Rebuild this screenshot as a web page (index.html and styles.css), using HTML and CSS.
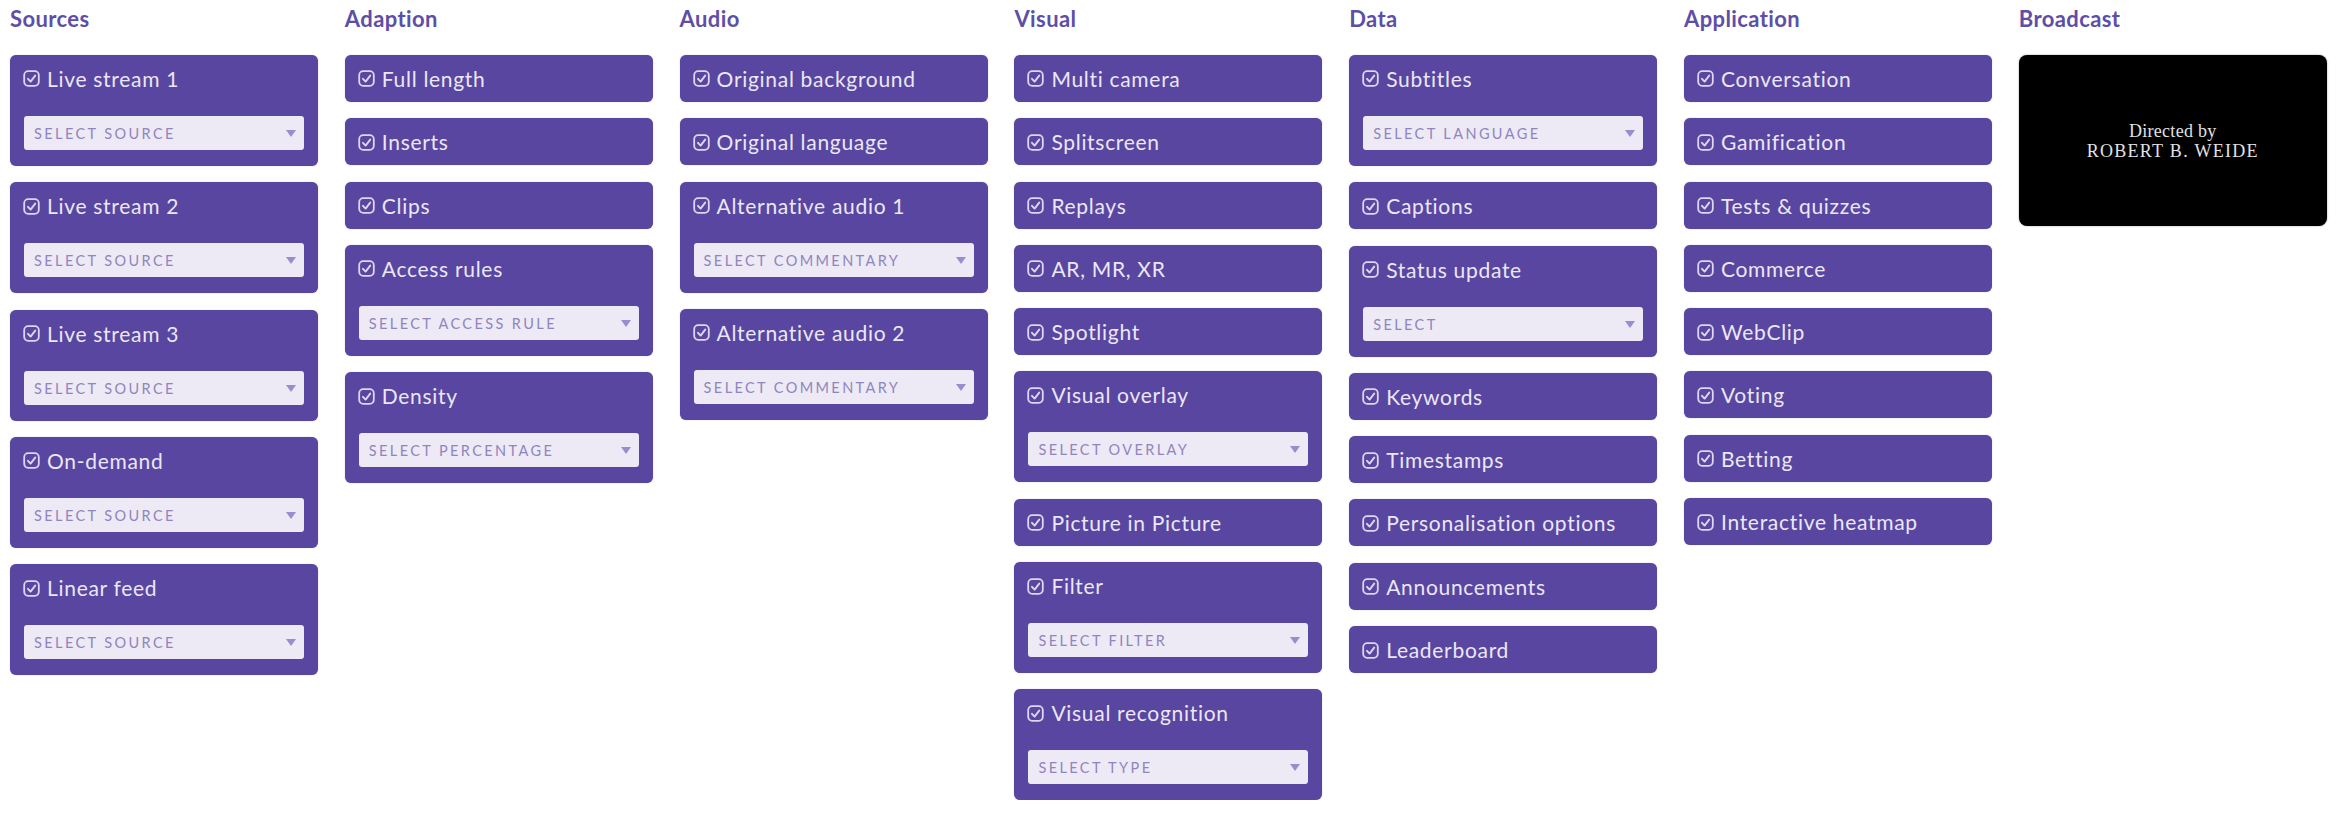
FILE: index.html
```html
<!DOCTYPE html>
<html>
<head>
    <meta charset="UTF-8">
    <meta name="viewport" content="width=device-width, initial-scale=1.0">
    <title>Stream builder</title>
    <link rel="stylesheet" href="styles.css">
</head>
<body>
    <svg width="0" height="0" style="position:absolute">
        <symbol id="check" viewBox="0 0 17 17">
            <rect x="1.2" y="1.2" width="14.6" height="14.6" rx="4" fill="none" stroke="currentColor" stroke-width="1.8"/>
            <polyline points="5,8.8 7.6,11.6 12.2,5.6" fill="none" stroke="currentColor" stroke-width="1.9" stroke-linecap="round" stroke-linejoin="round"/>
        </symbol>
    </svg>

    <div class="board">

        <div class="column">
            <div class="column-title">Sources</div>
            <div class="card">
                <div class="card-label"><svg class="tick"><use href="#check"/></svg>Live stream 1</div>
                <div class="select">Select source<span class="arrow"></span></div>
            </div>
            <div class="card">
                <div class="card-label"><svg class="tick"><use href="#check"/></svg>Live stream 2</div>
                <div class="select">Select source<span class="arrow"></span></div>
            </div>
            <div class="card">
                <div class="card-label"><svg class="tick"><use href="#check"/></svg>Live stream 3</div>
                <div class="select">Select source<span class="arrow"></span></div>
            </div>
            <div class="card">
                <div class="card-label"><svg class="tick"><use href="#check"/></svg>On-demand</div>
                <div class="select">Select source<span class="arrow"></span></div>
            </div>
            <div class="card">
                <div class="card-label"><svg class="tick"><use href="#check"/></svg>Linear feed</div>
                <div class="select">Select source<span class="arrow"></span></div>
            </div>
        </div>

        <div class="column">
            <div class="column-title">Adaption</div>
            <div class="card">
                <div class="card-label"><svg class="tick"><use href="#check"/></svg>Full length</div>
            </div>
            <div class="card">
                <div class="card-label"><svg class="tick"><use href="#check"/></svg>Inserts</div>
            </div>
            <div class="card">
                <div class="card-label"><svg class="tick"><use href="#check"/></svg>Clips</div>
            </div>
            <div class="card">
                <div class="card-label"><svg class="tick"><use href="#check"/></svg>Access rules</div>
                <div class="select">Select access rule<span class="arrow"></span></div>
            </div>
            <div class="card">
                <div class="card-label"><svg class="tick"><use href="#check"/></svg>Density</div>
                <div class="select">Select percentage<span class="arrow"></span></div>
            </div>
        </div>

        <div class="column">
            <div class="column-title">Audio</div>
            <div class="card">
                <div class="card-label"><svg class="tick"><use href="#check"/></svg>Original background</div>
            </div>
            <div class="card">
                <div class="card-label"><svg class="tick"><use href="#check"/></svg>Original language</div>
            </div>
            <div class="card">
                <div class="card-label"><svg class="tick"><use href="#check"/></svg>Alternative audio 1</div>
                <div class="select">Select commentary<span class="arrow"></span></div>
            </div>
            <div class="card">
                <div class="card-label"><svg class="tick"><use href="#check"/></svg>Alternative audio 2</div>
                <div class="select">Select commentary<span class="arrow"></span></div>
            </div>
        </div>

        <div class="column">
            <div class="column-title">Visual</div>
            <div class="card">
                <div class="card-label"><svg class="tick"><use href="#check"/></svg>Multi camera</div>
            </div>
            <div class="card">
                <div class="card-label"><svg class="tick"><use href="#check"/></svg>Splitscreen</div>
            </div>
            <div class="card">
                <div class="card-label"><svg class="tick"><use href="#check"/></svg>Replays</div>
            </div>
            <div class="card">
                <div class="card-label"><svg class="tick"><use href="#check"/></svg>AR, MR, XR</div>
            </div>
            <div class="card">
                <div class="card-label"><svg class="tick"><use href="#check"/></svg>Spotlight</div>
            </div>
            <div class="card">
                <div class="card-label"><svg class="tick"><use href="#check"/></svg>Visual overlay</div>
                <div class="select">Select overlay<span class="arrow"></span></div>
            </div>
            <div class="card">
                <div class="card-label"><svg class="tick"><use href="#check"/></svg>Picture in Picture</div>
            </div>
            <div class="card">
                <div class="card-label"><svg class="tick"><use href="#check"/></svg>Filter</div>
                <div class="select">Select filter<span class="arrow"></span></div>
            </div>
            <div class="card">
                <div class="card-label"><svg class="tick"><use href="#check"/></svg>Visual recognition</div>
                <div class="select">Select type<span class="arrow"></span></div>
            </div>
        </div>

        <div class="column">
            <div class="column-title">Data</div>
            <div class="card">
                <div class="card-label"><svg class="tick"><use href="#check"/></svg>Subtitles</div>
                <div class="select">Select language<span class="arrow"></span></div>
            </div>
            <div class="card">
                <div class="card-label"><svg class="tick"><use href="#check"/></svg>Captions</div>
            </div>
            <div class="card">
                <div class="card-label"><svg class="tick"><use href="#check"/></svg>Status update</div>
                <div class="select">Select<span class="arrow"></span></div>
            </div>
            <div class="card">
                <div class="card-label"><svg class="tick"><use href="#check"/></svg>Keywords</div>
            </div>
            <div class="card">
                <div class="card-label"><svg class="tick"><use href="#check"/></svg>Timestamps</div>
            </div>
            <div class="card">
                <div class="card-label"><svg class="tick"><use href="#check"/></svg>Personalisation options</div>
            </div>
            <div class="card">
                <div class="card-label"><svg class="tick"><use href="#check"/></svg>Announcements</div>
            </div>
            <div class="card">
                <div class="card-label"><svg class="tick"><use href="#check"/></svg>Leaderboard</div>
            </div>
        </div>

        <div class="column">
            <div class="column-title">Application</div>
            <div class="card">
                <div class="card-label"><svg class="tick"><use href="#check"/></svg>Conversation</div>
            </div>
            <div class="card">
                <div class="card-label"><svg class="tick"><use href="#check"/></svg>Gamification</div>
            </div>
            <div class="card">
                <div class="card-label"><svg class="tick"><use href="#check"/></svg>Tests &amp; quizzes</div>
            </div>
            <div class="card">
                <div class="card-label"><svg class="tick"><use href="#check"/></svg>Commerce</div>
            </div>
            <div class="card">
                <div class="card-label"><svg class="tick"><use href="#check"/></svg>WebClip</div>
            </div>
            <div class="card">
                <div class="card-label"><svg class="tick"><use href="#check"/></svg>Voting</div>
            </div>
            <div class="card">
                <div class="card-label"><svg class="tick"><use href="#check"/></svg>Betting</div>
            </div>
            <div class="card">
                <div class="card-label"><svg class="tick"><use href="#check"/></svg>Interactive heatmap</div>
            </div>
        </div>

        <div class="column">
            <div class="column-title">Broadcast</div>
            <div class="player">
                <div class="credits">
                    <div>Directed by</div>
                    <div class="director">ROBERT B. WEIDE</div>
                </div>
            </div>
        </div>

    </div>
</body>
</html>
```

FILE: styles.css
```css
body{
    margin: 0;
    background-color: white;
    font-family: Lato, "Open Sans", sans-serif;
}

.board{
    display: grid;
    grid-template-columns: repeat(7, 308px);
    column-gap: 26.8px;
    padding: 0 10px;
    align-items: start;
}

.column{
    display: flex;
    flex-direction: column;
    gap: 16.3px;
}

.column-title{
    height: 38.7px;
    padding-top: 5px;
    font-size: 22px;
    font-weight: 700;
    color: #5d4ea7;
    letter-spacing: 0.4px;
    box-sizing: border-box;
}

.card{
    background-color: #5846a0;
    border-radius: 6px;
    padding: 12px 14px;
    box-shadow: 0 0 1px rgba(88, 70, 160, 0.6);
}

.card-label{
    display: flex;
    align-items: center;
    height: 23px;
    font-size: 21px;
    letter-spacing: 0.7px;
    color: #ebe7f6;
    white-space: nowrap;
}

.tick{
    width: 17px;
    height: 17px;
    margin: 1px 7px 0 -1px;
    color: #dcd6f0;
    flex-shrink: 0;
}

.select{
    position: relative;
    margin: 26px 0 4px;
    height: 34px;
    line-height: 35px;
    padding: 0 10px;
    background-color: #edeaf5;
    border-radius: 3px;
    font-size: 14.5px;
    letter-spacing: 2.4px;
    text-transform: uppercase;
    color: #8f85bf;
}

.arrow{
    position: absolute;
    right: 8px;
    top: 14px;
    width: 0;
    height: 0;
    border-left: 5px solid transparent;
    border-right: 5px solid transparent;
    border-top: 7px solid #9a8ccf;
}

.player{
    height: 171px;
    background-color: black;
    border-radius: 8px;
    display: flex;
    align-items: center;
    justify-content: center;
    box-shadow: 0 0 2px rgba(0, 0, 0, 0.4);
}

.credits{
    margin-top: 2px;
    font-family: "Liberation Serif", serif;
    font-size: 18px;
    line-height: 20px;
    text-align: center;
    color: #e2e2e2;
    letter-spacing: 0.3px;
}

.director{
    letter-spacing: 1.3px;
}
```
